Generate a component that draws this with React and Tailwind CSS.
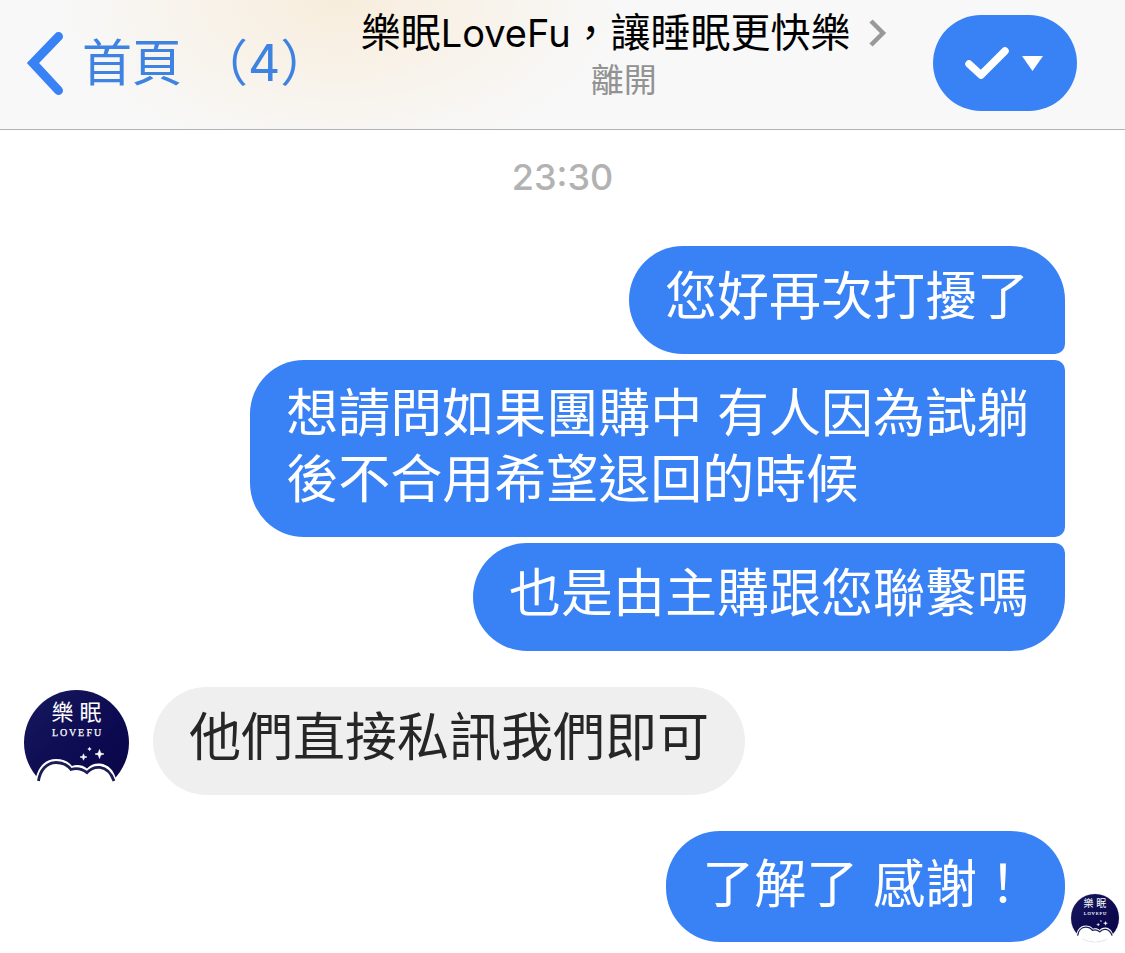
import React from "react";

function Avatar({ className }) {
  return (
    <svg viewBox="0 0 105 105" className={className} role="img" aria-label="樂眠 LOVEFU">
      <defs>
        <clipPath id="avatar-disc">
          <path d="M0 0H105V89H92V96H13V89H0Z" />
        </clipPath>
        <linearGradient id="avatar-night" x1="0" y1="0" x2="1" y2="1">
          <stop offset="0" stopColor="#17185f" />
          <stop offset="0.6" stopColor="#0c0a50" />
          <stop offset="1" stopColor="#0a0446" />
        </linearGradient>
      </defs>
      <circle cx="52.5" cy="52.5" r="52.5" fill="url(#avatar-night)" clipPath="url(#avatar-disc)" />
      <path
        d="M11 93C12.500 78.500 20.500 69 32 69C39 69 44.500 71.500 48 76C53 74.200 59 75.200 63 78.500C66 75 71 73 76 73.500C84.500 74.500 90 80.500 92 89L94 98H8Z"
        fill="#fff"
      />
      <path
        d="M14.500 91C16 80.500 22.500 72.500 32 72.500C38.500 72.500 43.500 75 47 79.500C52.500 77.700 58.500 79.200 63 82.700C66.500 78.700 71 76.900 76 77.400C83.500 78.400 87.500 84 90 91"
        fill="none"
        stroke="#1c1d55"
        strokeWidth="2.800"
      />
      <path
        d="M75.500 59.500L76.700 63L80 64L76.700 65L75.500 68.500L74.300 65L71 64L74.300 63ZM59.500 63.800L60.400 66.200L63 67L60.400 67.800L59.500 70.200L58.600 67.800L56 67L58.600 66.200ZM65.500 57.300L66 58.500L67.200 59L66 59.500L65.500 60.700L65 59.500L63.800 59L65 58.500Z"
        fill="#fff"
        stroke="#fff"
        strokeWidth="0.600"
      />
      <g fill="#fff">
        <text x="27.500 55.500" y="29.500" fontSize="22" className="font-['Noto_Sans_CJK_TC',sans-serif]">
          樂眠
        </text>
        <text
          x="28 36 45 54 62.500 70"
          y="45.500"
          fontSize="10"
          stroke="#fff"
          strokeWidth="0.250"
          className="font-['Liberation_Serif',serif]"
        >
          LOVEFU
        </text>
      </g>
    </svg>
  );
}

function Bubble({ className, children }) {
  return (
    <p className={`px-9 pb-6 text-[52px] leading-[66px] ${className}`}>{children}</p>
  );
}

export default function App() {
  return (
    <div className="min-h-screen bg-white font-[Inter,'Noto_Sans_CJK_TC',sans-serif]">
      <header className="flex items-start justify-between border-b border-[#b2b2b4] bg-[#f8f8f8] bg-[radial-gradient(ellipse_280px_160px_at_340px_0px,#f8eddc,#f8f8f8)] pb-[18px] pl-6 pr-12">
        <a href="#home" className="flex items-center gap-4 pt-[30px] text-[50px] leading-[66px] whitespace-nowrap text-[#3f83e2]">
          <svg viewBox="0 0 42 66" className="h-[66px] w-[42px]" fill="none" aria-hidden="true">
            <path d="M34.500 6.500L9 33L34.500 60.500" stroke="#3982f6" strokeWidth="9" strokeLinecap="round" strokeLinejoin="miter" />
          </svg>
          <span className="flex gap-4">
            <span>首頁</span>
            <span>（4）</span>
          </span>
        </a>
        <div className="mr-4 flex flex-1 flex-col items-center pt-[10px] whitespace-nowrap">
          <h1>
            <a href="#profile" className="flex items-center gap-[18px] text-[40px] leading-[46px] text-black">
              <span>
                樂眠<span className="text-[38px]">LoveFu</span>，讓睡眠更快樂
              </span>
              <svg viewBox="0 0 18 28" className="h-7 w-[18px]" fill="none" aria-hidden="true">
                <path d="M2 2L14 14L2 26" stroke="#999" strokeWidth="4.500" />
              </svg>
            </a>
          </h1>
          <p className="text-[33px] leading-[48px] text-[#929292]">離開</p>
        </div>
        <button
          type="button"
          aria-label="完成"
          className="mt-[15px] flex h-24 w-36 items-center justify-center gap-3 rounded-full bg-[#3982f6] pr-1"
        >
          <svg viewBox="0 0 46 34" className="h-[34px] w-[46px]" fill="none" aria-hidden="true">
            <path d="M5 18L17 29L41 5" stroke="#fff" strokeWidth="7.500" strokeLinecap="round" strokeLinejoin="round" />
          </svg>
          <svg viewBox="0 0 21 16" className="h-4 w-[21px]" aria-hidden="true">
            <path d="M0 1H21L10.500 16Z" fill="#fff" />
          </svg>
        </button>
      </header>

      <main className="flex flex-col pt-[23px] pb-[11px]">
        <time className="text-center text-[36px] leading-[48px] font-medium text-[#b2b2b2]">23:30</time>

        <section className="mt-[45px] flex flex-col items-end gap-1.5 pr-[60px] pl-6 text-white">
          <Bubble className="rounded-[54px] rounded-br-[10px] bg-[#3982f6] pt-[18px]">您好再次打擾了</Bubble>
          <Bubble className="rounded-l-[54px] rounded-r-[10px] bg-[#3982f6] pt-[21px]">
            想請問如果團購中 有人因為試躺
            <br />
            後不合用希望退回的時候
          </Bubble>
          <Bubble className="rounded-[54px] rounded-tr-[10px] bg-[#3982f6] pt-[18px]">也是由主購跟您聯繫嗎</Bubble>
        </section>

        <section className="mt-9 flex items-end gap-6 px-6">
          <Avatar className="size-[105px] shrink-0" />
          <Bubble className="rounded-[54px] bg-[#efefef] pt-[18px] text-[#262626]">他們直接私訊我們即可</Bubble>
        </section>

        <section className="mt-9 flex items-end justify-end gap-1.5 pr-1.5 pl-6">
          <Bubble className="rounded-[54px] bg-[#3982f6] pt-[21px] text-white">了解了 感謝！</Bubble>
          <span className="flex shrink-0 rounded-full shadow-[0_0_1px_#999]">
            <Avatar className="size-12" />
          </span>
        </section>
      </main>
    </div>
  );
}
